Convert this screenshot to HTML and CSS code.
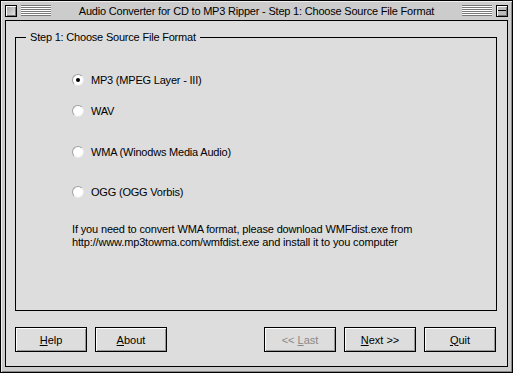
FILE: index.html
```html
<!DOCTYPE html>
<html lang="en">

<head>
    <meta charset="UTF-8">
    <title>Audio Converter for CD to MP3 Ripper</title>
    <link rel="stylesheet" href="styles.css">
</head>

<body>
    <main class="window">
        <header class="titlebar">
            <span class="box box__close"></span>
            <span class="stripes"></span>
            <h1 class="title">Audio Converter for CD to MP3 Ripper - Step 1: Choose Source File Format</h1>
            <span class="stripes"></span>
            <span class="box box__zoom"></span>
        </header>
        <section class="content">
            <fieldset class="group">
                <legend>Step 1: Choose Source File Format</legend>
                <div class="options">
                    <label class="option option__mp3"><span class="radio checked"></span>MP3 (MPEG Layer - III)</label>
                    <label class="option option__wav"><span class="radio"></span>WAV</label>
                    <label class="option option__wma"><span class="radio"></span>WMA (Winodws Media Audio)</label>
                    <label class="option option__ogg"><span class="radio"></span>OGG (OGG Vorbis)</label>
                    <p class="note">If you need to convert WMA format, please download WMFdist.exe from<br>http://www.mp3towma.com/wmfdist.exe and install it to you computer</p>
                </div>
            </fieldset>
            <div class="buttons">
                <div class="buttons__left">
                    <button class="btn"><u>H</u>elp</button>
                    <button class="btn"><u>A</u>bout</button>
                </div>
                <div class="buttons__right">
                    <button class="btn disabled">&lt;&lt; <u>L</u>ast</button>
                    <button class="btn"><u>N</u>ext &gt;&gt;</button>
                    <button class="btn"><u>Q</u>uit</button>
                </div>
            </div>
        </section>
    </main>
</body>

</html>
```
FILE: styles.css
```css
* {
    box-sizing: border-box;
}

body {
    margin: 0;
    font-family: "Liberation Sans", Arial, sans-serif;
    font-size: 11px;
    color: #000;
}

.window {
    width: 513px;
    height: 373px;
    display: flex;
    flex-direction: column;
    border: 1px solid #000;
    background: #cccccc;
    box-shadow: inset 1px 1px 0 #eeeeee, inset -1px -1px 0 #888888;
}

.titlebar {
    height: 19px;
    display: flex;
    align-items: center;
    padding: 0 4px 0 4px;
}

.box {
    width: 12px;
    height: 12px;
    border: 1px solid #000;
    background: linear-gradient(135deg, #999 0%, #eee 100%);
    box-shadow: inset 1px 1px 0 #fff, inset -1px -1px 0 #777;
}

.box__zoom {
    background: #bbb;
    position: relative;
}

.box__zoom::after {
    content: "";
    position: absolute;
    left: 1px;
    right: 1px;
    top: 4px;
    height: 2px;
    border-top: 1px solid #000;
}

.stripes {
    width: 30px;
    height: 11px;
    margin: 0 4px;
    background: repeating-linear-gradient(to bottom, #777 0, #777 1px, #fff 1px, #fff 2px);
}

.title {
    flex: 1;
    margin: 0;
    font-size: 11px;
    letter-spacing: -0.2px;
    font-weight: normal;
    text-align: center;
    white-space: nowrap;
}

.content {
    flex: 1;
    margin: 0 4px 5px 4px;
    border: 1px solid #000;
    background: #dddddd;
    display: flex;
    flex-direction: column;
    padding: 10px 10px 10px 9px;
}

.group {
    margin: 0;
    padding: 0;
    height: 280px;
    border: 1px solid #000;
}

.group legend {
    margin-left: 10px;
    padding: 0 4px;
    font-size: 11px;
    letter-spacing: -0.2px;
}

.options {
    display: flex;
    flex-direction: column;
    align-items: flex-start;
    padding-left: 56px;
}

.option {
    display: flex;
    align-items: center;
    font-size: 11px;
    letter-spacing: -0.2px;
    height: 14px;
}

.option__mp3 {
    margin-top: 30px;
}

.option__wav {
    margin-top: 17px;
}

.option__wma {
    margin-top: 27px;
}

.option__ogg {
    margin-top: 26px;
}

.radio {
    width: 12px;
    height: 12px;
    margin-right: 7px;
    border-radius: 50%;
    background: #fff;
    border: 1px solid #a0a0a0;
    border-right-color: #e8e8e8;
    border-bottom-color: #e8e8e8;
    display: flex;
    align-items: center;
    justify-content: center;
}

.radio.checked::after {
    content: "";
    width: 4px;
    height: 4px;
    border-radius: 50%;
    background: #000;
}

.note {
    margin: 24px 0 0 0;
    font-size: 11px;
    letter-spacing: -0.15px;
    line-height: 13px;
}

.buttons {
    display: flex;
    justify-content: space-between;
    margin: 16px 1px 0 0;
}

.buttons__left,
.buttons__right {
    display: flex;
    gap: 8px;
}

.btn {
    width: 72px;
    height: 25px;
    padding: 0;
    font-family: "Liberation Sans", Arial, sans-serif;
    font-size: 11px;
    color: #000;
    background: #dddddd;
    border: 1px solid #000;
    box-shadow: inset 1px 1px 0 #fff, inset -1px -1px 0 #999;
}

.btn.disabled {
    color: #888;
}
```
